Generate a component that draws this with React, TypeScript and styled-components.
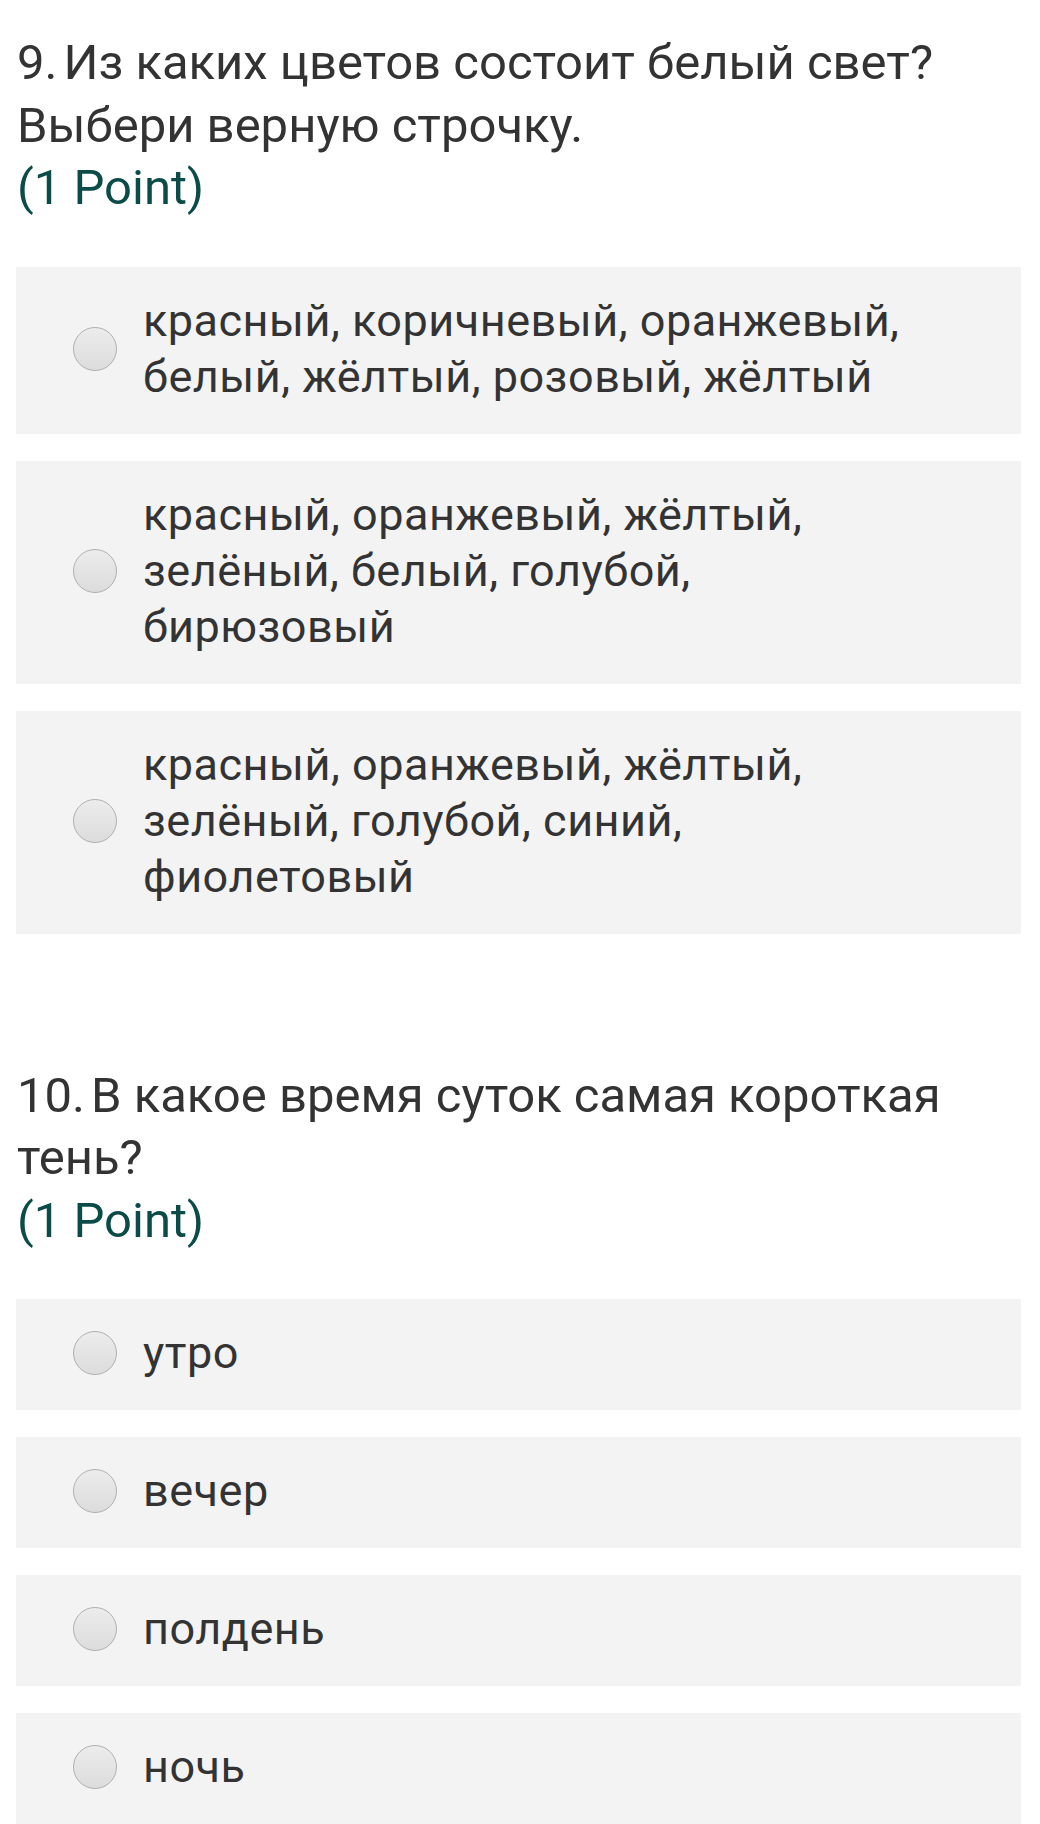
import React from 'react';
import styled, { createGlobalStyle } from 'styled-components';

const GlobalStyle = createGlobalStyle`
  html, body {
    margin: 0;
    padding: 0;
    background: #ffffff;
  }
  body {
    font-family: Roboto, "Noto Sans", "Liberation Sans", sans-serif;
    color: #333333;
  }
`;

const Page = styled.div`
  padding: 0 19px 0 16px;
  overflow: hidden;
  height: 1824px;
  box-sizing: border-box;
`;

const QuestionBlock = styled.section<{ $first?: boolean }>`
  padding-top: ${props => (props.$first ? '32px' : '131px')};
`;

const QuestionTitle = styled.div`
  font-size: 49px;
  line-height: 62.5px;
  color: #333333;
  padding-left: 1px;
`;

const Number = styled.span`
  margin-right: 6px;
`;

const Points = styled.div`
  font-size: 49px;
  line-height: 62.5px;
  color: #0b4b48;
  padding-left: 1px;
`;

const Choices = styled.div`
  margin-top: 47px;
  display: flex;
  flex-direction: column;
  gap: 27px;
`;

const Choice = styled.label`
  display: flex;
  align-items: center;
  background: #f3f3f3;
  padding: 26px 20px 29px 57px;
  cursor: pointer;
`;

const Radio = styled.span`
  flex: 0 0 44px;
  width: 44px;
  height: 44px;
  border-radius: 50%;
  box-sizing: border-box;
  border: 1.5px solid #b0b0b0;
  background: linear-gradient(to bottom, #ececec, #dcdcdc);
  margin-right: 26px;
`;

const ChoiceText = styled.span`
  font-size: 45px;
  letter-spacing: 0.5px;
  line-height: 56px;
  color: #333333;
`;

interface Question {
  num: string;
  text: string[];
  options: string[][];
}

const questions: Question[] = [
  {
    num: '9.',
    text: ['Из каких цветов состоит белый свет?', 'Выбери верную строчку.'],
    options: [
      ['красный, коричневый, оранжевый,', 'белый, жёлтый, розовый, жёлтый'],
      ['красный, оранжевый, жёлтый,', 'зелёный, белый, голубой,', 'бирюзовый'],
      ['красный, оранжевый, жёлтый,', 'зелёный, голубой, синий,', 'фиолетовый'],
    ],
  },
  {
    num: '10.',
    text: ['В какое время суток самая короткая', 'тень?'],
    options: [['утро'], ['вечер'], ['полдень'], ['ночь']],
  },
];

const App: React.FC = () => {
  return (
    <>
      <GlobalStyle />
      <Page>
        {questions.map((q, qi) => (
          <QuestionBlock key={q.num} $first={qi === 0}>
            <QuestionTitle>
              {q.text.map((line, li) => (
                <div key={li}>
                  {li === 0 && <Number>{q.num}</Number>}
                  {line}
                </div>
              ))}
            </QuestionTitle>
            <Points>(1 Point)</Points>
            <Choices>
              {q.options.map((opt, oi) => (
                <Choice key={oi}>
                  <Radio />
                  <ChoiceText>
                    {opt.map((l, i) => (
                      <div key={i}>{l}</div>
                    ))}
                  </ChoiceText>
                </Choice>
              ))}
            </Choices>
          </QuestionBlock>
        ))}
      </Page>
    </>
  );
};

export default App;
